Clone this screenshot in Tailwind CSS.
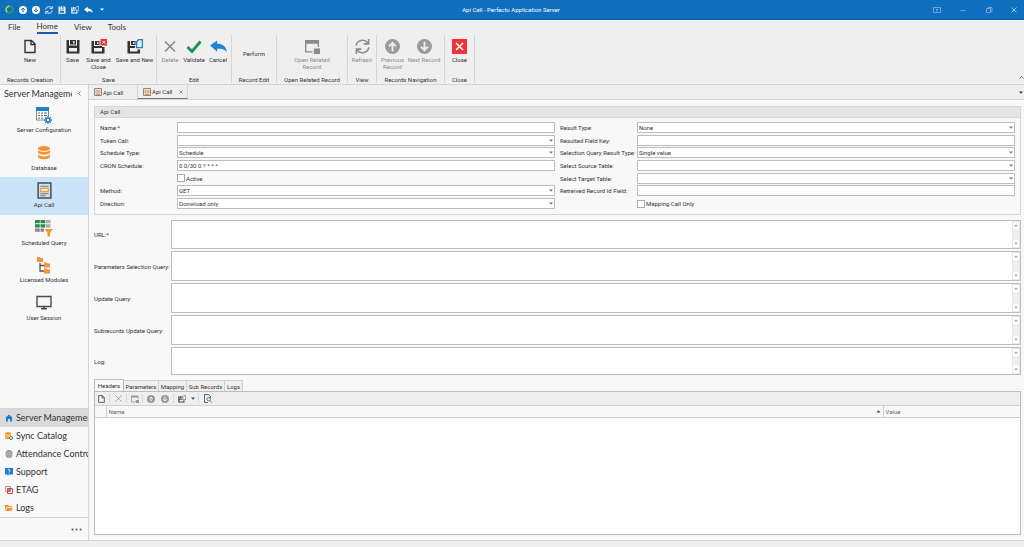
<!DOCTYPE html>
<html lang="en">
<head>
<meta charset="utf-8">
<title>Api Call - Perfecto Application Server</title>
<script src="https://cdn.jsdelivr.net/npm/@tailwindcss/browser@4"></script>
</head>
<body class="flex h-screen flex-col overflow-hidden bg-[#f8f8f8] font-['Roboto','Noto_Sans',sans-serif] text-[6px] leading-[7px] text-[#333]">
<svg class="hidden">
  <symbol id="up" viewBox="0 0 16 16"><circle cx="8" cy="8" r="8" fill="currentColor"/><path d="M8 13V4M4.200 7.800 8 4l3.800 3.800" fill="none" stroke="var(--arrow)" stroke-width="2"/></symbol>
  <symbol id="down" viewBox="0 0 16 16"><circle cx="8" cy="8" r="8" fill="currentColor"/><path d="M8 3v9M4.200 8.200 8 12l3.800-3.800" fill="none" stroke="var(--arrow)" stroke-width="2"/></symbol>
  <symbol id="refresh" viewBox="0 0 16 16"><path d="M1.200 7A7 7 0 0 1 13.500 4M14.800 9A7 7 0 0 1 2.500 12M14.500 0v5.200H9.300M1.500 16v-5.200h5.200" fill="none" stroke="currentColor" stroke-width="1.700"/></symbol>
  <symbol id="save" viewBox="0 0 14 15"><path d="M.500 1H3v5.500h8V1h2.500v13.500H.500zM3 9V12.500h8V9z" fill="currentColor" fill-rule="evenodd"/><path d="M4 1h6v4.500H4zM7 2v2.500h1.500V2z" fill="currentColor" fill-rule="evenodd"/></symbol>
  <symbol id="savenew" viewBox="0 0 16 15"><path d="M.500 2H3v5h5v2h-5v3.500h7.500V10.500H13v4H.500z" fill="currentColor"/><path d="M4 2h4.500v4H4zM6 3v2h1.500V3z" fill="currentColor" fill-rule="evenodd"/><path d="M11.500.700h3.800v8H9.600V2.800z" fill="none" stroke="var(--page)" stroke-width="1.300"/></symbol>
  <symbol id="undo" viewBox="0 0 18 16"><path d="M0 7 7.500 1.500V5C13 5 17 7.500 18 14c-2.500-3-6-3.500-10.500-3.500v3z" fill="currentColor"/></symbol>
  <symbol id="page" viewBox="0 0 12 14"><path d="M1 1h6.500L11 4.500V13H1zM7 1v4h4" fill="none" stroke="currentColor" stroke-width="1.400"/></symbol>
  <symbol id="related" viewBox="0 0 16 16"><path d="M0 1h15v7.500h-1.500V5h-12v8H8v1.500H0zM9.500 10H16v6H9.500z" fill="currentColor"/></symbol>
  <symbol id="cross" viewBox="0 0 12 12"><path d="m1 1 10 10M11 1 1 11" fill="none" stroke="currentColor" stroke-width="var(--sw)"/></symbol>
  <symbol id="caret" viewBox="0 0 4 3"><path d="M0 .500h4L2 2.800z" fill="currentColor"/></symbol>
  <symbol id="doc" viewBox="0 0 14 16"><path d="M1 1h12v14H1z" fill="none" stroke="#4a4a4a" stroke-width="1.400"/><path d="M3 4h8M3 11h8M3 13h5" stroke="#777"/><path d="M3.500 6h7v3h-7z" fill="#fff" stroke="#f59b42" stroke-width="1.300"/></symbol>
  <symbol id="tabdoc" viewBox="0 0 8 8"><path d="M.500.500h7v7h-7z" fill="#e9e2dc" stroke="#888"/><path d="M1.500 2h5v3.500h-5z" fill="#f3b27a"/><path d="M2 6.500h4" stroke="#888" stroke-width=".7"/></symbol>
</svg>

<header class="flex h-5 shrink-0 items-center justify-between border-b border-[#0b5cab] bg-[#106ebe] text-white">
  <div class="flex flex-1 items-center gap-[5px] pl-[5px] [--arrow:#106ebe] [--page:#fff]">
    <svg class="size-[9px]" viewBox="0 0 16 16" fill="none" stroke-width="3"><path d="M8 2a6 6 0 0 0-4 10.500" stroke="#a9cf55"/><path d="M4 12.500A6 6 0 1 0 9 2" stroke="#1fa060"/></svg>
    <button aria-label="Previous" class="size-2"><svg class="size-2"><use href="#up"/></svg></button>
    <button aria-label="Next" class="size-2"><svg class="size-2"><use href="#down"/></svg></button>
    <button aria-label="Refresh" class="size-2"><svg class="size-2"><use href="#refresh"/></svg></button>
    <button aria-label="Save" class="size-2"><svg class="size-2"><use href="#save"/></svg></button>
    <button aria-label="Save and new" class="size-2"><svg class="size-2"><use href="#savenew"/></svg></button>
    <button aria-label="Undo" class="h-2 w-2"><svg class="h-2 w-[9px]"><use href="#undo"/></svg></button>
    <button aria-label="Customize" class="ml-[3px] flex"><svg class="h-[3px] w-1"><use href="#caret"/></svg></button>
  </div>
  <h1>Api Call - Perfecto Application Server</h1>
  <div class="flex flex-1 items-center justify-end gap-[18px] pr-[7px] text-[#7fb1df]">
    <button aria-label="Ribbon options"><svg class="size-2" viewBox="0 0 8 8" fill="none" stroke="currentColor"><path d="M.500 1.500h7v5h-7zM4 6V3M3 4l1-1 1 1" stroke-width=".8"/></svg></button>
    <button aria-label="Minimize"><svg class="size-2" viewBox="0 0 8 8"><path d="M1.500 4.500h5" stroke="currentColor" stroke-width=".8"/></svg></button>
    <button aria-label="Restore"><svg class="size-2" viewBox="0 0 8 8" fill="none" stroke="currentColor"><path d="M1.500 2.500h4v4h-4zM3 2.500v-1h4v4H5.500" stroke-width=".8"/></svg></button>
    <button aria-label="Close window" class="text-[#cfe2f4] [--sw:1.5]"><svg class="size-[6px]"><use href="#cross"/></svg></button>
  </div>
</header>

<nav class="mt-px flex h-[13px] shrink-0 items-stretch gap-4 bg-[#efefef] pl-2 font-['Lato','Noto_Sans',sans-serif] text-[8px] leading-[11px]">
  <button>File</button>
  <button class="border-b-2 border-[#1f56b5]">Home</button>
  <button>View</button>
  <button>Tools</button>
</nav>

<section aria-label="Ribbon" class="flex h-[51px] shrink-0 border-b border-[#d4d4d4] bg-[#efefef] [--arrow:#efefef] [--page:#1680d0]">
  <div class="my-px flex w-[61px] flex-col items-center justify-between border-r border-[#d6d6d6]">
    <button class="flex flex-col items-center gap-[2px] pt-1"><svg class="h-[15px] w-3"><use href="#page"/></svg>New</button><h2>Records Creation</h2>
  </div>
  <div class="my-px flex w-[96px] flex-col items-center justify-between border-r border-[#d6d6d6]">
    <div class="flex items-start gap-[3px] pt-1">
      <button class="flex w-[18px] flex-col items-center gap-[2px]"><svg class="h-[15px] w-[14px]"><use href="#save"/></svg>Save</button>
      <button class="flex w-[28px] flex-col items-center gap-[2px]"><svg class="h-[15px] w-4" viewBox="0 0 16 15"><path d="M.500 2H3v5h8v1h2.500v6.500H.500zM3 9V12.500h8V9z" fill="currentColor" fill-rule="evenodd"/><path d="M4 2h4.500v4H4zM6 3v2h1.500V3z" fill="currentColor" fill-rule="evenodd"/><path d="M9.500 0H16v6.500H9.500z" fill="#e8302f"/><path d="m11.300 1.800 3 3m0-3-3 3" stroke="#fff"/></svg><span>Save and<br>Close</span></button>
      <button class="flex w-[38px] flex-col items-center gap-[2px] whitespace-nowrap"><svg class="h-[15px] w-4"><use href="#savenew"/></svg>Save and New</button>
    </div><h2>Save</h2>
  </div>
  <div class="my-px flex w-[75px] flex-col items-center justify-between border-r border-[#d6d6d6]">
    <div class="flex items-start gap-1 pt-1">
      <button disabled class="flex w-[18px] flex-col items-center gap-[2px] text-[#8b8b8b] [--sw:1.7]"><svg class="h-[15px] w-3"><use href="#cross"/></svg>Delete</button>
      <button class="flex w-[22px] flex-col items-center gap-[2px]"><svg class="h-[15px] w-4" viewBox="0 0 16 15"><path d="m1.500 8 4.500 4.500L14.500 2.500" fill="none" stroke="#20914a" stroke-width="2.800"/></svg>Validate</button>
      <button class="flex w-[18px] flex-col items-center gap-[2px]"><svg class="h-[15px] w-[17px] text-[#2186cf]"><use href="#undo"/></svg>Cancel</button>
    </div><h2>Edit</h2>
  </div>
  <div class="my-px flex w-[45px] flex-col items-center justify-between border-r border-[#d6d6d6]"><button class="pt-[15px]">Perform</button><h2>Record Edit</h2></div>
  <div class="my-px flex w-[71px] flex-col items-center justify-between border-r border-[#d6d6d6]">
    <button disabled class="flex flex-col items-center gap-[2px] pt-1 text-[#8b8b8b]"><svg class="size-[15px]"><use href="#related"/></svg><span>Open Related<br>Record</span></button><h2>Open Related Record</h2>
  </div>
  <div class="my-px flex w-[29px] flex-col items-center justify-between border-r border-[#d6d6d6]">
    <button disabled class="flex flex-col items-center gap-[2px] pt-1 text-[#8b8b8b]"><svg class="size-[15px]"><use href="#refresh"/></svg>Refresh</button><h2>View</h2>
  </div>
  <div class="my-px flex w-[68px] flex-col items-center justify-between border-r border-[#d6d6d6]">
    <div class="flex items-start gap-[2px] pt-1 text-[#8b8b8b]">
      <button disabled class="flex w-[25px] flex-col items-center gap-[2px]"><svg class="size-[15px] text-[#9b9b9b]"><use href="#up"/></svg><span>Previous<br>Record</span></button>
      <button disabled class="flex w-[34px] flex-col items-center gap-[2px] whitespace-nowrap"><svg class="size-[15px] text-[#9b9b9b]"><use href="#down"/></svg>Next Record</button>
    </div><h2>Records Navigation</h2>
  </div>
  <div class="my-px flex w-[30px] flex-col items-center justify-between border-r border-[#d6d6d6]">
    <button class="flex flex-col items-center gap-[2px] pt-1"><svg class="size-[15px]" viewBox="0 0 15 15"><path d="M0 0h15v15H0z" fill="#ee3438"/><path d="m4 4 7 7m0-7-7 7" stroke="#fff" stroke-width="1.500"/></svg>Close</button><h2>Close</h2>
  </div>
  <button aria-label="Collapse ribbon" class="ml-auto flex items-end pb-[5px]"><svg class="h-[3px] w-[5px]" viewBox="0 0 5 3"><path d="m.500 2.500 2-2 2 2" fill="none" stroke="#555" stroke-width=".8"/></svg></button>
</section>

<div class="flex min-h-0 flex-1">
  <aside class="flex w-[89px] shrink-0 flex-col border-r border-[#d4d4d4] bg-[#f8f8f8]">
    <div class="flex h-[17px] shrink-0 items-center justify-between pr-[7px] pl-1 font-['Lato','Noto_Sans',sans-serif] text-[9px] leading-[12px]"><h2 class="w-[68px] overflow-hidden whitespace-nowrap">Server Management</h2>
      <button aria-label="Collapse"><svg class="h-[5px] w-[3px]" viewBox="0 0 3 5"><path d="M2.500.500.500 2.500l2 2" fill="none" stroke="#555" stroke-width=".8"/></svg></button></div>
    <div class="flex h-[225px] shrink-0 flex-col">
      <button class="flex flex-1 flex-col items-center justify-center gap-[2px] pb-px"><svg class="h-[17px] w-4" viewBox="0 0 16 17"><path d="M.500 1h12v12H.500z" fill="#fff" stroke="#666" stroke-width=".8"/><path d="M0 0h13v4H0z" fill="#1c80cb"/><path d="M2 6h2m1 0h2m1 0h3M2 8.500h2m1 0h2m1 0h3M2 11h2m1 0h2" stroke="#666" stroke-width="1.200"/><circle cx="12" cy="13" r="3.800" fill="#f8f8f8"/><circle cx="12" cy="13" r="2" fill="#fff" stroke="#1c80cb" stroke-width="1.500"/><path d="M12 9v1.500m0 5V17M8 13h1.500m5 0H16M9.200 10.200l1 1m3.600 3.600 1 1m0-5.600-1 1m-3.600 3.600-1 1" stroke="#1c80cb" stroke-width="1.400"/></svg>Server Configuration</button>
      <button class="flex flex-1 flex-col items-center justify-center gap-[2px] pb-px"><svg class="h-[17px] w-3" viewBox="0 0 12 17" fill="#f79234"><ellipse cx="6" cy="3.500" rx="6" ry="2.500"/><path d="M0 5c2 2.500 10 2.500 12 0v2.500c-1 3-11 3-12 0zM0 9.500c2 2.500 10 2.500 12 0V12c-1 3-11 3-12 0z"/></svg>Database</button>
      <button class="flex flex-1 flex-col items-center justify-center gap-[2px] bg-[#cce4f7] pb-px"><svg class="h-[17px] w-[15px]"><use href="#doc"/></svg>Api Call</button>
      <button class="flex flex-1 flex-col items-center justify-center gap-[2px] pb-px"><svg class="h-[17px] w-[18px]" viewBox="0 0 18 17"><path d="M0 0h4.800v3.300H0zM5.500 0h4.800v3.300H5.500zM0 4.300h4.800v3.300H0zM5.500 4.300h4.800v3.300H5.500z" fill="#258b47"/><path d="M11 0h4.500v3.300H11zM11 4.300h4.500v3.300H11z" fill="#aaa"/><path d="M0 8.600h4.800v3.200H0zM5.500 8.600H9v3.200H5.500z" fill="#888"/><path d="M9.500 9h8.500l-3 3.800v3.700h-2.500v-3.700z" fill="#f79234"/></svg>Scheduled Query</button>
      <button class="flex flex-1 flex-col items-center justify-center gap-[2px] pb-px"><svg class="h-[17px] w-[14px]" viewBox="0 0 14 17"><path d="M3 6v8h4M3 8.500h4" fill="none" stroke="#555" stroke-width="1.300"/><path d="M0 0h2.500l1 1H6v4H0zM7 5.500h2.500l1 1H13v4H7zM7 11.500h2.500l1 1H13v4H7z" fill="#f79234"/></svg>Licensed Modules</button>
      <button class="flex flex-1 flex-col items-center justify-center gap-[2px] pb-px"><svg class="h-[17px] w-4" viewBox="0 0 16 17"><path d="M1 1.500h14v10H1z" fill="none" stroke="#4a4a4a" stroke-width="1.400"/><path d="M7 12h2v1h2v1.500H5V13h2z" fill="#4a4a4a"/></svg>User Session</button>
    </div>
    <div class="mt-auto flex shrink-0 flex-col border-t border-b border-[#d4d4d4] font-['Lato','Noto_Sans',sans-serif] text-[9px] leading-[18px]">
      <button class="flex h-[18px] items-center gap-[3px] overflow-hidden bg-[#dadada] pl-[5px] whitespace-nowrap"><svg class="size-2 shrink-0" viewBox="0 0 8 8"><path d="M4 .500 7.800 4H7v3.500H5V5H3v2.500H1V4H.200z" fill="#1c80cb"/></svg>Server Management</button>
      <button class="flex h-[18px] items-center gap-[3px] pl-[5px]"><svg class="size-2 shrink-0" viewBox="0 0 8 8"><path d="M0 1q3-2 6 0v3H4v3Q1 7.500 0 6z" fill="#f79234"/><path d="M0 2.500q3 1.500 6 0M0 4.500q2 1 4 0" stroke="#fff" stroke-width=".5" fill="none"/><circle cx="6" cy="6" r="1.500" fill="none" stroke="#258b47"/></svg>Sync Catalog</button>
      <button class="flex h-[18px] items-center gap-[3px] overflow-hidden pl-[5px] whitespace-nowrap"><svg class="size-2 shrink-0" viewBox="0 0 8 8"><ellipse cx="4" cy="4" rx="3.500" ry="4" fill="#999"/><path d="M2 6V3.500q2-3 4 0V6M4 3.500v4" fill="none" stroke="#ddd" stroke-width=".5"/></svg>Attendance Control</button>
      <button class="flex h-[18px] items-center gap-[3px] pl-[5px]"><svg class="size-2 shrink-0" viewBox="0 0 8 8"><path d="M0 0h8v6.500H4L2.500 8V6.500H0z" fill="#1c80cb"/><path d="M3 2q1.500-1 2 0T4 4m0 .700v.800" fill="none" stroke="#fff" stroke-width=".8"/></svg>Support</button>
      <button class="flex h-[18px] items-center gap-[3px] pl-[5px]"><svg class="size-2 shrink-0" viewBox="0 0 8 8" fill="none"><path d="M.500.500h5v5h-5z" stroke="#888" stroke-width=".8"/><path d="M2.500 2.500h5v5h-5z" stroke="#d33" stroke-width=".9"/><path d="M4 2v4M2 4h4" stroke="#d33"/></svg>ETAG</button>
      <button class="flex h-[18px] items-center gap-[3px] pl-[5px]"><svg class="size-2 shrink-0" viewBox="0 0 8 8"><path d="M0 1h3l1 1h3v1H2L0 6zM2.300 3.700H8L6.300 7H.500z" fill="#f79234"/></svg>Logs</button>
    </div>
    <button aria-label="More" class="flex h-[22px] shrink-0 items-center justify-end pr-[6px]"><svg class="h-[3px] w-[11px]" viewBox="0 0 11 3" fill="#555"><circle cx="1.500" cy="1.500" r="1"/><circle cx="5.500" cy="1.500" r="1"/><circle cx="9.500" cy="1.500" r="1"/></svg></button>
  </aside>

  <main class="flex min-w-0 flex-1 flex-col">
    <div class="flex h-[15px] shrink-0 items-stretch border-b border-[#d4d4d4] bg-[#efefef]">
      <button class="flex w-[48px] items-center gap-px pl-[5px]"><svg class="size-2"><use href="#tabdoc"/></svg>Api Call</button>
      <div class="flex w-[51px] items-center border-x border-b border-x-[#d4d4d4] border-b-[#777]">
        <button class="flex items-center gap-px pl-[5px]"><svg class="size-2"><use href="#tabdoc"/></svg>Api Call</button>
        <button aria-label="Close tab" class="ml-auto pr-1 [--sw:1.5]"><svg class="size-1"><use href="#cross"/></svg></button>
      </div>
      <button aria-label="Tab list" class="ml-auto flex items-center pr-px"><svg class="h-[3px] w-1"><use href="#caret"/></svg></button>
    </div>

    <div class="flex min-h-0 flex-1 flex-col pt-[6px] pr-[3px] pb-[5px] pl-[5px]">
      <section class="shrink-0 border border-[#d6d6d6]">
        <h2 class="h-[11px] border-b border-[#d6d6d6] bg-[#e6e6e6] pl-[5px] leading-[10px]">Api Call</h2>
        <div class="grid grid-cols-2 gap-x-[5px] px-[5px] pt-[3px] pb-1">
          <div class="grid h-[89px] auto-rows-fr grid-cols-[77px_1fr] items-center whitespace-nowrap">
            <label for="name">Name:*</label><input id="name" class="h-[11px] w-full border border-[#bcbcbc] bg-white px-px">
            <label for="token">Token Call:</label><div class="relative flex"><select id="token" class="h-[11px] w-full appearance-none border border-[#bcbcbc] bg-white px-px"><option></option></select><svg class="pointer-events-none absolute top-1 right-[2px] h-[3px] w-1 text-[#777]"><use href="#caret"/></svg></div>
            <label for="stype">Schedule Type:</label><div class="relative flex"><select id="stype" class="h-[11px] w-full appearance-none border border-[#bcbcbc] bg-white px-px"><option>Schedule</option></select><svg class="pointer-events-none absolute top-1 right-[2px] h-[3px] w-1 text-[#777]"><use href="#caret"/></svg></div>
            <label for="cron">CRON Schedule:</label><input id="cron" value="0 0/30 0 ? * * *" class="h-[11px] w-full border border-[#bcbcbc] bg-white px-px">
            <label class="col-start-2 flex items-center gap-px"><input type="checkbox" class="size-2 appearance-none border border-[#aaa] bg-white">Active</label>
            <label for="method">Method:</label><div class="relative flex"><select id="method" class="h-[11px] w-full appearance-none border border-[#bcbcbc] bg-white px-px"><option>GET</option></select><svg class="pointer-events-none absolute top-1 right-[2px] h-[3px] w-1 text-[#777]"><use href="#caret"/></svg></div>
            <label for="dir">Direction:</label><div class="relative flex"><select id="dir" class="h-[11px] w-full appearance-none border border-[#bcbcbc] bg-white px-px"><option>Donwload only</option></select><svg class="pointer-events-none absolute top-1 right-[2px] h-[3px] w-1 text-[#777]"><use href="#caret"/></svg></div>
          </div>
          <div class="grid h-[89px] auto-rows-fr grid-cols-[77px_1fr] items-center whitespace-nowrap">
            <label for="rtype">Result Type:</label><div class="relative flex"><select id="rtype" class="h-[11px] w-full appearance-none border border-[#bcbcbc] bg-white px-px"><option>None</option></select><svg class="pointer-events-none absolute top-1 right-[2px] h-[3px] w-1 text-[#777]"><use href="#caret"/></svg></div>
            <label for="rkey">Resulted Field Key:</label><input id="rkey" class="h-[11px] w-full border border-[#bcbcbc] bg-white px-px">
            <label for="sq">Selection Query Result Type:</label><div class="relative flex"><select id="sq" class="h-[11px] w-full appearance-none border border-[#bcbcbc] bg-white px-px"><option>Single value</option></select><svg class="pointer-events-none absolute top-1 right-[2px] h-[3px] w-1 text-[#777]"><use href="#caret"/></svg></div>
            <label for="src">Select Source Table:</label><div class="relative flex"><select id="src" class="h-[11px] w-full appearance-none border border-[#bcbcbc] bg-white px-px"><option></option></select><svg class="pointer-events-none absolute top-1 right-[2px] h-[3px] w-1 text-[#777]"><use href="#caret"/></svg></div>
            <label for="tgt">Select Target Table:</label><div class="relative flex"><select id="tgt" class="h-[11px] w-full appearance-none border border-[#bcbcbc] bg-white px-px"><option></option></select><svg class="pointer-events-none absolute top-1 right-[2px] h-[3px] w-1 text-[#777]"><use href="#caret"/></svg></div>
            <label for="rid">Retreived Record Id Field:</label><input id="rid" class="h-[11px] w-full border border-[#bcbcbc] bg-white px-px">
            <label class="col-start-2 flex items-center gap-px"><input type="checkbox" class="size-2 appearance-none border border-[#aaa] bg-white">Mapping Call Only</label>
          </div>
        </div>
      </section>

      <section class="mt-[5px] grid shrink-0 grid-cols-[77px_1fr] items-center gap-y-[2px] whitespace-nowrap">
        <label for="url">URL:*</label>
        <div class="flex h-[29px] border border-[#bcbcbc] bg-white"><textarea id="url" class="flex-1 resize-none"></textarea><div class="flex w-2 flex-col items-center justify-between border border-[#e8e8e8] bg-[#efefef] text-[#aaa]"><span class="flex h-[7px] w-full items-center justify-center bg-white"><svg class="h-[3px] w-1 rotate-180"><use href="#caret"/></svg></span><span class="flex h-[7px] w-full items-center justify-center bg-white"><svg class="h-[3px] w-1"><use href="#caret"/></svg></span></div></div>
        <label for="psq">Parameters Selection Query:</label>
        <div class="flex h-[30px] border border-[#bcbcbc] bg-white"><textarea id="psq" class="flex-1 resize-none"></textarea><div class="flex w-2 flex-col items-center justify-between border border-[#e8e8e8] bg-[#efefef] text-[#aaa]"><span class="flex h-[7px] w-full items-center justify-center bg-white"><svg class="h-[3px] w-1 rotate-180"><use href="#caret"/></svg></span><span class="flex h-[7px] w-full items-center justify-center bg-white"><svg class="h-[3px] w-1"><use href="#caret"/></svg></span></div></div>
        <label for="uq">Update Query:</label>
        <div class="flex h-[30px] border border-[#bcbcbc] bg-white"><textarea id="uq" class="flex-1 resize-none"></textarea><div class="flex w-2 flex-col items-center justify-between border border-[#e8e8e8] bg-[#efefef] text-[#aaa]"><span class="flex h-[7px] w-full items-center justify-center bg-white"><svg class="h-[3px] w-1 rotate-180"><use href="#caret"/></svg></span><span class="flex h-[7px] w-full items-center justify-center bg-white"><svg class="h-[3px] w-1"><use href="#caret"/></svg></span></div></div>
        <label for="suq">Subrecords Update Query:</label>
        <div class="flex h-[30px] border border-[#bcbcbc] bg-white"><textarea id="suq" class="flex-1 resize-none"></textarea><div class="flex w-2 flex-col items-center justify-between border border-[#e8e8e8] bg-[#efefef] text-[#aaa]"><span class="flex h-[7px] w-full items-center justify-center bg-white"><svg class="h-[3px] w-1 rotate-180"><use href="#caret"/></svg></span><span class="flex h-[7px] w-full items-center justify-center bg-white"><svg class="h-[3px] w-1"><use href="#caret"/></svg></span></div></div>
        <label for="log">Log:</label>
        <div class="flex h-[28px] border border-[#bcbcbc] bg-white"><textarea id="log" class="flex-1 resize-none"></textarea><div class="flex w-2 flex-col items-center justify-between border border-[#e8e8e8] bg-[#efefef] text-[#aaa]"><span class="flex h-[7px] w-full items-center justify-center bg-white"><svg class="h-[3px] w-1 rotate-180"><use href="#caret"/></svg></span><span class="flex h-[7px] w-full items-center justify-center bg-white"><svg class="h-[3px] w-1"><use href="#caret"/></svg></span></div></div>
      </section>

      <div role="tablist" class="mt-1 flex h-3 shrink-0 items-end">
        <button role="tab" aria-selected="true" class="h-3 w-[30px] border border-b-0 border-[#bcbcbc] bg-[#f8f8f8]">Headers</button>
        <button role="tab" class="h-[11px] w-[35px] border border-b-0 border-l-0 border-[#cfcfcf] bg-[#efefef]">Parameters</button>
        <button role="tab" class="h-[11px] w-[28px] border border-b-0 border-l-0 border-[#cfcfcf] bg-[#efefef]">Mapping</button>
        <button role="tab" class="h-[11px] w-[38px] border border-b-0 border-l-0 border-[#cfcfcf] bg-[#efefef]">Sub Records</button>
        <button role="tab" class="h-[11px] w-[18px] border border-b-0 border-l-0 border-[#cfcfcf] bg-[#efefef]">Logs</button>
      </div>
      <section class="flex min-h-0 flex-1 flex-col border border-[#bcbcbc] bg-white">
        <div class="flex h-[13px] shrink-0 items-center bg-[#efefef] pl-[3px] text-[#999] [--arrow:#efefef] [--page:#666]">
          <button aria-label="New" class="text-[#444]"><svg class="h-2 w-[7px]"><use href="#page"/></svg></button>
          <span class="ml-1 h-[9px] w-px bg-[#d8d8d8]"></span>
          <button aria-label="Delete" class="ml-[5px] [--sw:1.5]"><svg class="size-[7px]"><use href="#cross"/></svg></button>
          <span class="ml-1 h-[9px] w-px bg-[#d8d8d8]"></span>
          <button aria-label="Open related" class="ml-1"><svg class="size-2"><use href="#related"/></svg></button>
          <span class="ml-[3px] h-[9px] w-px bg-[#d8d8d8]"></span>
          <button aria-label="Up" class="ml-1"><svg class="size-2"><use href="#up"/></svg></button>
          <button aria-label="Down" class="ml-[6px]"><svg class="size-2"><use href="#down"/></svg></button>
          <span class="ml-1 h-[9px] w-px bg-[#d8d8d8]"></span>
          <button aria-label="Export" class="ml-1 text-[#444]"><svg class="size-2"><use href="#savenew"/></svg></button>
          <button aria-label="Export options" class="ml-[5px] text-[#444]"><svg class="h-[3px] w-1"><use href="#caret"/></svg></button>
          <span class="ml-[3px] h-[9px] w-px bg-[#d8d8d8]"></span>
          <button aria-label="Preview" class="ml-[5px] text-[#555]"><svg class="h-[9px] w-2" viewBox="0 0 8 9" fill="none"><path d="M6.500 4V2.500l-2-2h-4v8H4" stroke="currentColor" stroke-width=".9"/><circle cx="4.700" cy="5.200" r="1.700" stroke="#1c80cb" stroke-width=".9"/><path d="m6 6.500 1.700 2" stroke="#1c80cb"/></svg></button>
        </div>
        <table class="w-full table-fixed border-collapse">
          <thead><tr class="h-3 border-y border-[#cfcfcf] bg-[#f8f8f8] text-left text-[#666]">
            <th class="w-[11px] border-r border-[#cfcfcf]"></th>
            <th class="border-r border-[#cfcfcf] px-[2px] font-normal"><span class="flex items-center justify-between">Name<svg class="h-[3px] w-[5px] rotate-180 text-[#444]"><use href="#caret"/></svg></span></th>
            <th class="w-[137px] px-[2px] font-normal">Value</th>
          </tr></thead>
        </table>
      </section>
    </div>
  </main>
</div>
<footer class="h-[7px] shrink-0 border-t border-[#d4d4d4] bg-[#efefef]"></footer>
</body>
</html>
